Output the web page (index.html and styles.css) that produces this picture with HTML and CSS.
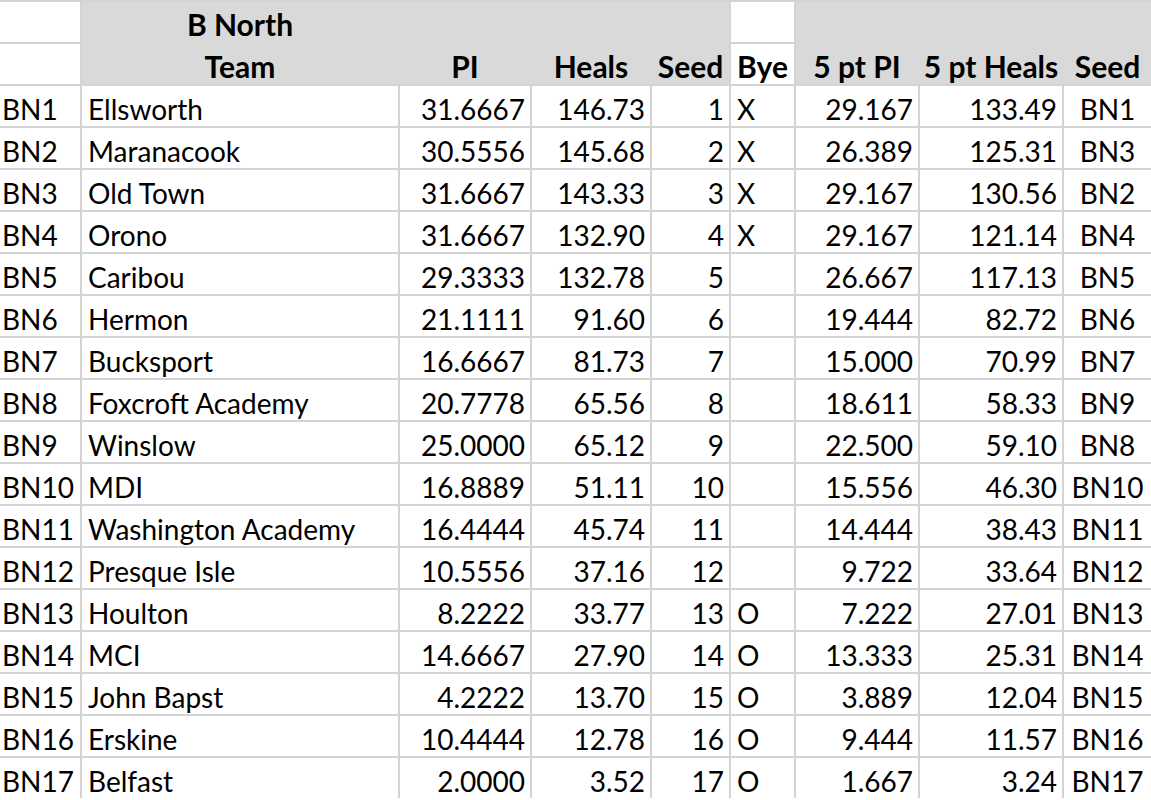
FILE: index.html
```html
<!DOCTYPE html>
<html>
<head>
<meta charset="utf-8">
<link rel="stylesheet" href="styles.css">
</head>
<body>
<div class="sheet">
  <div class="cell a1"></div>
  <div class="hdr hdr-main">
    <div class="h c-center r1">B North</div>
    <div class="h c-center r2">Team</div>
    <div class="h c-center r2">PI</div>
    <div class="h c-center r2">Heals</div>
    <div class="h c-center r2">Seed</div>
  </div>
  <div class="cell f1"></div>
  <div class="hdr hdr-five">
    <div class="h c-center r2">5 pt PI</div>
    <div class="h c-center r2">5 pt Heals</div>
    <div class="h c-center r2">Seed</div>
  </div>
  <div class="cell a2"></div>
  <div class="cell f2 bold center">Bye</div>

  <div class="cell id">BN1</div><div class="cell team">Ellsworth</div><div class="cell num">31.6667</div><div class="cell num">146.73</div><div class="cell num">1</div><div class="cell bye">X</div><div class="cell num">29.167</div><div class="cell num">133.49</div><div class="cell center">BN1</div>
  <div class="cell id">BN2</div><div class="cell team">Maranacook</div><div class="cell num">30.5556</div><div class="cell num">145.68</div><div class="cell num">2</div><div class="cell bye">X</div><div class="cell num">26.389</div><div class="cell num">125.31</div><div class="cell center">BN3</div>
  <div class="cell id">BN3</div><div class="cell team">Old Town</div><div class="cell num">31.6667</div><div class="cell num">143.33</div><div class="cell num">3</div><div class="cell bye">X</div><div class="cell num">29.167</div><div class="cell num">130.56</div><div class="cell center">BN2</div>
  <div class="cell id">BN4</div><div class="cell team">Orono</div><div class="cell num">31.6667</div><div class="cell num">132.90</div><div class="cell num">4</div><div class="cell bye">X</div><div class="cell num">29.167</div><div class="cell num">121.14</div><div class="cell center">BN4</div>
  <div class="cell id">BN5</div><div class="cell team">Caribou</div><div class="cell num">29.3333</div><div class="cell num">132.78</div><div class="cell num">5</div><div class="cell bye"></div><div class="cell num">26.667</div><div class="cell num">117.13</div><div class="cell center">BN5</div>
  <div class="cell id">BN6</div><div class="cell team">Hermon</div><div class="cell num">21.1111</div><div class="cell num">91.60</div><div class="cell num">6</div><div class="cell bye"></div><div class="cell num">19.444</div><div class="cell num">82.72</div><div class="cell center">BN6</div>
  <div class="cell id">BN7</div><div class="cell team">Bucksport</div><div class="cell num">16.6667</div><div class="cell num">81.73</div><div class="cell num">7</div><div class="cell bye"></div><div class="cell num">15.000</div><div class="cell num">70.99</div><div class="cell center">BN7</div>
  <div class="cell id">BN8</div><div class="cell team">Foxcroft Academy</div><div class="cell num">20.7778</div><div class="cell num">65.56</div><div class="cell num">8</div><div class="cell bye"></div><div class="cell num">18.611</div><div class="cell num">58.33</div><div class="cell center">BN9</div>
  <div class="cell id">BN9</div><div class="cell team">Winslow</div><div class="cell num">25.0000</div><div class="cell num">65.12</div><div class="cell num">9</div><div class="cell bye"></div><div class="cell num">22.500</div><div class="cell num">59.10</div><div class="cell center">BN8</div>
  <div class="cell id">BN10</div><div class="cell team">MDI</div><div class="cell num">16.8889</div><div class="cell num">51.11</div><div class="cell num">10</div><div class="cell bye"></div><div class="cell num">15.556</div><div class="cell num">46.30</div><div class="cell center">BN10</div>
  <div class="cell id">BN11</div><div class="cell team">Washington Academy</div><div class="cell num">16.4444</div><div class="cell num">45.74</div><div class="cell num">11</div><div class="cell bye"></div><div class="cell num">14.444</div><div class="cell num">38.43</div><div class="cell center">BN11</div>
  <div class="cell id">BN12</div><div class="cell team">Presque Isle</div><div class="cell num">10.5556</div><div class="cell num">37.16</div><div class="cell num">12</div><div class="cell bye"></div><div class="cell num">9.722</div><div class="cell num">33.64</div><div class="cell center">BN12</div>
  <div class="cell id">BN13</div><div class="cell team">Houlton</div><div class="cell num">8.2222</div><div class="cell num">33.77</div><div class="cell num">13</div><div class="cell bye">O</div><div class="cell num">7.222</div><div class="cell num">27.01</div><div class="cell center">BN13</div>
  <div class="cell id">BN14</div><div class="cell team">MCI</div><div class="cell num">14.6667</div><div class="cell num">27.90</div><div class="cell num">14</div><div class="cell bye">O</div><div class="cell num">13.333</div><div class="cell num">25.31</div><div class="cell center">BN14</div>
  <div class="cell id">BN15</div><div class="cell team">John Bapst</div><div class="cell num">4.2222</div><div class="cell num">13.70</div><div class="cell num">15</div><div class="cell bye">O</div><div class="cell num">3.889</div><div class="cell num">12.04</div><div class="cell center">BN15</div>
  <div class="cell id">BN16</div><div class="cell team">Erskine</div><div class="cell num">10.4444</div><div class="cell num">12.78</div><div class="cell num">16</div><div class="cell bye">O</div><div class="cell num">9.444</div><div class="cell num">11.57</div><div class="cell center">BN16</div>
  <div class="cell id">BN17</div><div class="cell team">Belfast</div><div class="cell num">2.0000</div><div class="cell num">3.52</div><div class="cell num">17</div><div class="cell bye">O</div><div class="cell num">1.667</div><div class="cell num">3.24</div><div class="cell center">BN17</div>
</div>
</body>
</html>
```

FILE: styles.css
```css
html, body {
  margin: 0;
  padding: 0;
  background: #ffffff;
}

body {
  font-family: Lato, "Liberation Sans", sans-serif;
  font-size: 28px;
  color: #000000;
  overflow: hidden;
}

.sheet {
  display: grid;
  grid-template-columns: 80px 316px 130px 118px 77px 63px 122px 142px 87px;
  grid-auto-rows: 40px;
  gap: 2px;
  padding-top: 2px;
  background: #d4d4d4;
  width: 1151px;
}

.cell {
  background: #ffffff;
  line-height: 34px;
  padding-top: 6px;
  white-space: nowrap;
  overflow: hidden;
}

.a1 { grid-column: 1; grid-row: 1; }
.a2 { grid-column: 1; grid-row: 2; }
.f1 { grid-column: 6; grid-row: 1; }
.f2 { grid-column: 6; grid-row: 2; }

.hdr {
  background: #d9d9d9;
  display: grid;
  grid-template-rows: 40px 40px;
  gap: 2px;
  font-weight: 700;
  font-size: 30px;
}

.hdr-main {
  grid-column: 2 / span 4;
  grid-row: 1 / span 2;
  grid-template-columns: 316px 130px 118px 77px;
}

.hdr-five {
  grid-column: 7 / span 3;
  grid-row: 1 / span 2;
  grid-template-columns: 122px 142px 87px;
}

.h {
  line-height: 34px;
  padding-top: 5px;
  white-space: nowrap;
}

.r1 { grid-row: 1; grid-column: 1; }
.r2 { grid-row: 2; }

.c-center, .center { text-align: center; }
.bold { font-weight: 700; font-size: 30px; padding-top: 5px; }

.id { padding-left: 2px; }
.team { padding-left: 6px; }
.num { text-align: right; padding-right: 5px; }
.bye { padding-left: 6px; }
```
